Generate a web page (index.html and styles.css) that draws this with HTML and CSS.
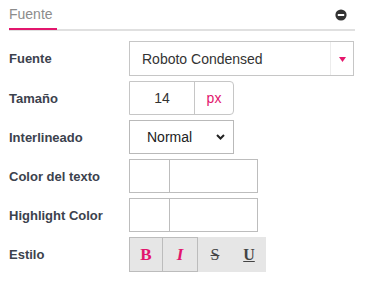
FILE: index.html
```html
<!DOCTYPE html>
<html lang="es">
<head>
<meta charset="utf-8">
<link rel="stylesheet" href="styles.css">
</head>
<body>
<div class="panel">
  <div class="panel-head">
    <div class="tab">Fuente</div>
    <span class="toggle">
      <svg width="12" height="12" viewBox="0 0 12 12"><circle cx="6" cy="6" r="5.6" fill="#333"/><rect x="2.8" y="5" width="6.4" height="2" fill="#fff"/></svg>
    </span>
  </div>
  <div class="form">
    <div class="row">
      <div class="label">Fuente</div>
      <div class="font-select">
        <span class="fs-value">Roboto Condensed</span>
        <span class="fs-arrow"><svg width="7" height="5" viewBox="0 0 7 5"><path d="M0 0H7L3.5 5Z" fill="#e5166c"/></svg></span>
      </div>
    </div>
    <div class="row">
      <div class="label">Tamaño</div>
      <div class="size-input">
        <span class="size-value">14</span>
        <span class="size-unit">px</span>
      </div>
    </div>
    <div class="row">
      <div class="label">Interlineado</div>
      <div class="native-select">
        <span class="ns-value">Normal</span>
        <svg class="chev" width="9" height="6" viewBox="0 0 9 6"><path d="M1 1L4.5 4.5L8 1" fill="none" stroke="#222" stroke-width="2"/></svg>
      </div>
    </div>
    <div class="row">
      <div class="label">Color del texto</div>
      <div class="color-box"><span class="swatch"></span><span class="hex"></span></div>
    </div>
    <div class="row">
      <div class="label">Highlight Color</div>
      <div class="color-box"><span class="swatch"></span><span class="hex"></span></div>
    </div>
    <div class="row">
      <div class="label">Estilo</div>
      <div class="styles">
        <span class="sbtn active bold">B</span>
        <span class="sbtn active ital">I</span>
        <span class="sbtn strike">S</span>
        <span class="sbtn under">U</span>
      </div>
    </div>
  </div>
</div>
</body>
</html>
```
FILE: styles.css
```css
html, body {
  margin: 0;
  padding: 0;
  background: #fff;
}
body {
  font-family: "Liberation Sans", Arial, sans-serif;
  font-size: 14px;
  color: #333;
}
.panel {
  width: 346px;
  margin-left: 9px;
}
.panel-head {
  display: flex;
  justify-content: space-between;
  align-items: flex-end;
  border-bottom: 2px solid #e0e0e0;
}
.tab {
  padding-top: 6px;
  padding-bottom: 5px;
  line-height: 17px;
  font-size: 14px;
  color: #8c8c8c;
  width: 48px;
  border-bottom: 2px solid #e2166d;
  margin-bottom: -1px;
}
.toggle {
  align-self: flex-start;
  margin-top: 9px;
  margin-right: 8px;
  width: 12px;
  height: 12px;
  display: flex;
}
.form {
  margin-top: 10px;
  display: flex;
  flex-direction: column;
  gap: 5px;
}
.row {
  display: flex;
  align-items: center;
}
.label {
  width: 120px;
  font-weight: bold;
  font-size: 13px;
  color: #3c424d;
}
.font-select {
  box-sizing: border-box;
  width: 225px;
  height: 35px;
  border: 1px solid #c6c6c6;
  display: flex;
  align-items: stretch;
}
.fs-value {
  flex: 1;
  display: flex;
  align-items: center;
  padding-left: 12px;
  color: #333;
}
.fs-arrow {
  width: 22px;
  border-left: 1px solid #ececec;
  display: flex;
  align-items: center;
  justify-content: center;
  padding-top: 2px;
}
.size-input {
  box-sizing: border-box;
  width: 105px;
  height: 34px;
  border: 1px solid #c6c6c6;
  border-radius: 0 4px 4px 0;
  display: flex;
}
.size-value {
  width: 64px;
  border-right: 1px solid #c6c6c6;
  display: flex;
  align-items: center;
  justify-content: center;
  color: #333;
}
.size-unit {
  flex: 1;
  display: flex;
  align-items: center;
  justify-content: center;
  color: #e2166d;
}
.native-select {
  box-sizing: border-box;
  width: 105px;
  height: 34px;
  border: 1px solid #b9b9b9;
  display: flex;
  align-items: center;
  padding-left: 17px;
  padding-right: 8px;
  justify-content: space-between;
}
.ns-value {
  color: #222;
}
.chev {
  display: block;
}
.color-box {
  box-sizing: border-box;
  width: 129px;
  height: 34px;
  border: 1px solid #bdbdbd;
  display: flex;
}
.swatch {
  width: 39px;
  border-right: 1px solid #bdbdbd;
}
.hex {
  flex: 1;
}
.styles {
  display: flex;
  height: 35px;
  background: #e6e6e6;
}
.sbtn {
  box-sizing: border-box;
  width: 34px;
  height: 35px;
  display: flex;
  align-items: center;
  justify-content: center;
  font-family: "Liberation Serif", "Times New Roman", serif;
  font-size: 17px;
  color: #444;
}
.sbtn.active {
  border: 1px solid #bcbcbc;
  color: #e2166d;
}
.sbtn.active + .sbtn.active {
  border-left: none;
  width: 35px;
}
.bold {
  font-weight: bold;
}
.ital {
  font-style: italic;
  font-weight: bold;
}
.strike {
  text-decoration: line-through;
  font-size: 16px;
}
.under {
  text-decoration: underline;
  font-weight: bold;
  font-size: 16px;
}
```
